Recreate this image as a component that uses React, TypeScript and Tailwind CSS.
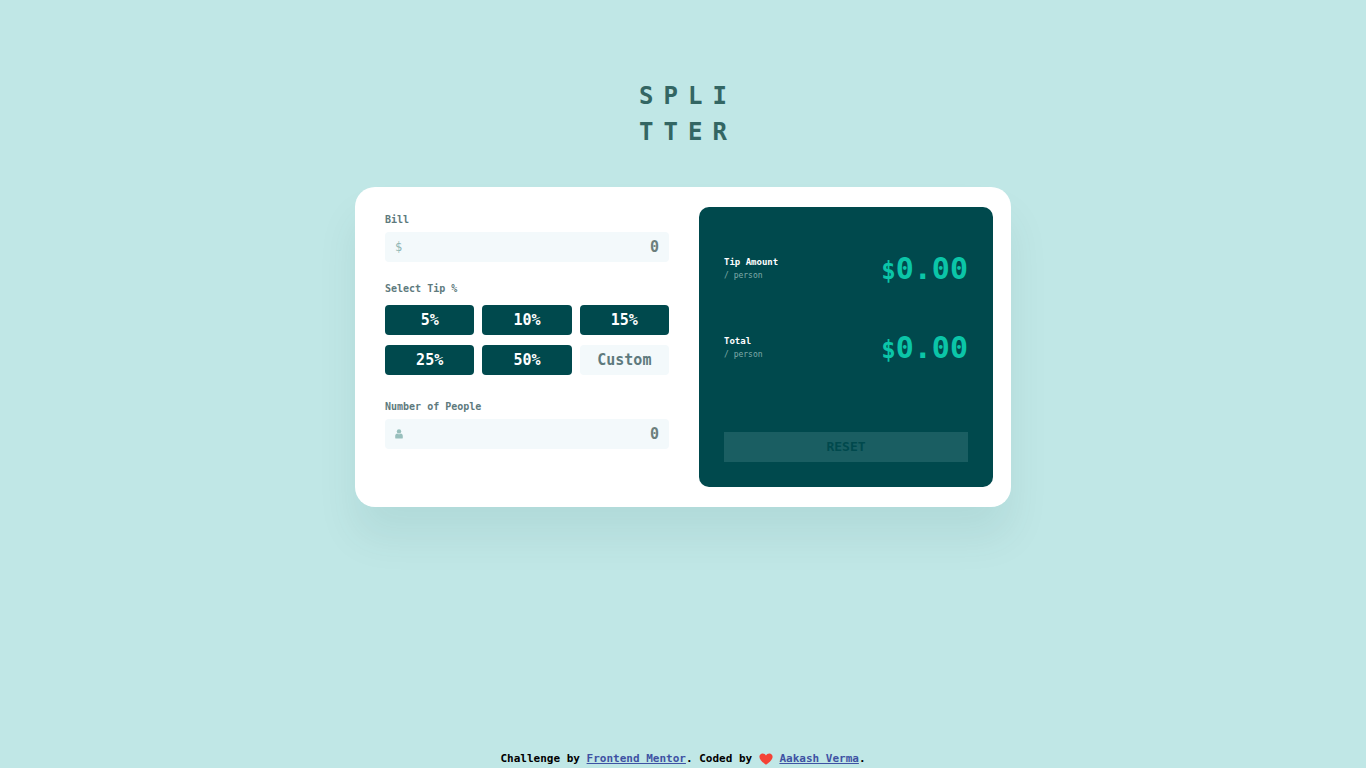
import { useState } from "react";

const TIPS = [5, 10, 15, 25, 50];

function Amount({ label, value }: { label: string; value: number }) {
  return (
    <div className="flex items-center justify-between">
      <div>
        <h2 className="text-[9px] leading-[14px] font-bold text-white">{label}</h2>
        <p className="text-[8px] leading-[14px] text-[#7fa9a9]">/ person</p>
      </div>
      <p className="text-[30px] leading-[44px] font-bold text-[#0bc5a8]">
        <span className="text-2xl">$</span>
        {value.toFixed(2)}
      </p>
    </div>
  );
}

const field =
  "h-[30px] w-full rounded-sm bg-[#f3f9fb] pr-[10px] pl-8 text-right text-[15px] font-bold text-[#00494d] placeholder:text-[#6c7f7c] outline-none focus:ring-2 focus:ring-[#26c0ab]";

export default function App() {
  const [bill, setBill] = useState("");
  const [people, setPeople] = useState("");
  const [tip, setTip] = useState("");

  const count = Number(people);
  const tipAmount = count > 0 ? (Number(bill) * Number(tip)) / 100 / count : 0;
  const total = count > 0 ? Number(bill) / count + tipAmount : 0;
  const pristine = !bill && !people && !tip;

  const reset = () => {
    setBill("");
    setPeople("");
    setTip("");
  };

  return (
    <div className="flex min-h-screen flex-col items-center bg-[#c0e7e6] font-['DejaVu_Sans_Mono','Liberation_Mono',monospace]">
      <h1 className="mt-[78px] pl-[10px] text-2xl leading-9 font-bold tracking-[10px] text-[#336663]">
        SPLI
        <br />
        TTER
      </h1>

      <main className="mt-[37px] grid w-full max-w-[656px] grid-cols-1 gap-[30px] rounded-[20px] bg-white py-5 pr-[18px] pl-[30px] shadow-[0_30px_40px_rgba(0,73,77,0.08)] sm:grid-cols-[284fr_294fr]">
        <form className="pt-[5px]" onSubmit={(e) => e.preventDefault()}>
          <label htmlFor="bill" className="block text-[10px] leading-4 font-bold text-[#5e7a7d]">
            Bill
          </label>
          <div className="relative mt-1">
            <span className="absolute inset-y-0 left-[10px] flex items-center text-xs text-[#8fb5b3]">$</span>
            <input
              id="bill"
              inputMode="decimal"
              placeholder="0"
              value={bill}
              onChange={(e) => setBill(e.target.value)}
              className={field}
            />
          </div>

          <fieldset className="mt-[19px]">
            <legend className="text-[10px] leading-4 font-bold text-[#5e7a7d]">Select Tip %</legend>
            <div className="mt-2 grid grid-cols-3 gap-x-2 gap-y-[10px]">
              {TIPS.map((t) => (
                <button
                  key={t}
                  type="button"
                  onClick={() => setTip(String(t))}
                  className="h-[30px] rounded bg-[#00494d] text-[15px] font-bold text-white hover:bg-[#26c0ab]"
                >
                  {t}%
                </button>
              ))}
              <input
                aria-label="Custom tip percentage"
                inputMode="decimal"
                placeholder="Custom"
                value={tip}
                onChange={(e) => setTip(e.target.value)}
                className="h-[30px] w-full min-w-0 rounded bg-[#f3f9fb] text-center text-[15px] font-bold text-[#00494d] outline-none placeholder:text-[#5e7a7d] focus:ring-2 focus:ring-[#26c0ab]"
              />
            </div>
          </fieldset>

          <label htmlFor="people" className="mt-6 block text-[10px] leading-4 font-bold text-[#5e7a7d]">
            Number of People
          </label>
          <div className="relative mt-1">
            <span className="absolute inset-y-0 left-[10px] flex items-center">
              <svg width="8" height="10" viewBox="0 0 8 10" fill="#98bfbc" aria-hidden="true">
                <circle cx="4" cy="2.4" r="2.2" />
                <path d="M2 4.5c.6.5 1.2.8 2 .8s1.4-.3 2-.8c1.3.4 1.8 1.4 1.8 2.8v1.4c0 .6-.3.9-.9.9H1.1c-.6 0-.9-.3-.9-.9V7.300c0-1.400.5-2.400 1.800-2.800Z" />
              </svg>
            </span>
            <input
              id="people"
              inputMode="numeric"
              placeholder="0"
              value={people}
              onChange={(e) => setPeople(e.target.value)}
              className={field}
            />
          </div>
        </form>

        <section className="flex min-h-[280px] flex-col rounded-[10px] bg-[#00494d] px-[25px] pt-10 pb-[25px]">
          <div className="flex flex-col gap-[35px]">
            <Amount label="Tip Amount" value={tipAmount} />
            <Amount label="Total" value={total} />
          </div>
          <button
            type="button"
            onClick={reset}
            disabled={pristine}
            className="mt-auto h-[30px] w-full bg-[#26c0ab] text-[13px] font-bold text-[#00494d] disabled:bg-[#1a5e62]"
          >
            RESET
          </button>
        </section>
      </main>

      <footer className="mt-auto pt-8 text-center text-[11px] leading-[18px] font-bold text-black">
        Challenge by{" "}
        <a href="https://www.frontendmentor.io" className="text-[#3e52a3] underline">
          Frontend Mentor
        </a>
        . Coded by{" "}
        <svg
          className="inline-block align-middle"
          width="14"
          height="12"
          viewBox="0 0 14 12"
          fill="#f44336"
          role="img"
          aria-label="love"
        >
          <path d="M7 11.800C4.500 10 .4 7 .4 3.700.4 1.800 1.800.4 3.700.4 5.100.4 6.400 1.200 7 2.500 7.600 1.200 8.900.4 10.300.4c1.900 0 3.300 1.400 3.300 3.300C13.600 7 9.500 10 7 11.800Z" />
        </svg>{" "}
        <a href="#" className="text-[#3e52a3] underline">
          Aakash Verma
        </a>
        .
      </footer>
    </div>
  );
}
